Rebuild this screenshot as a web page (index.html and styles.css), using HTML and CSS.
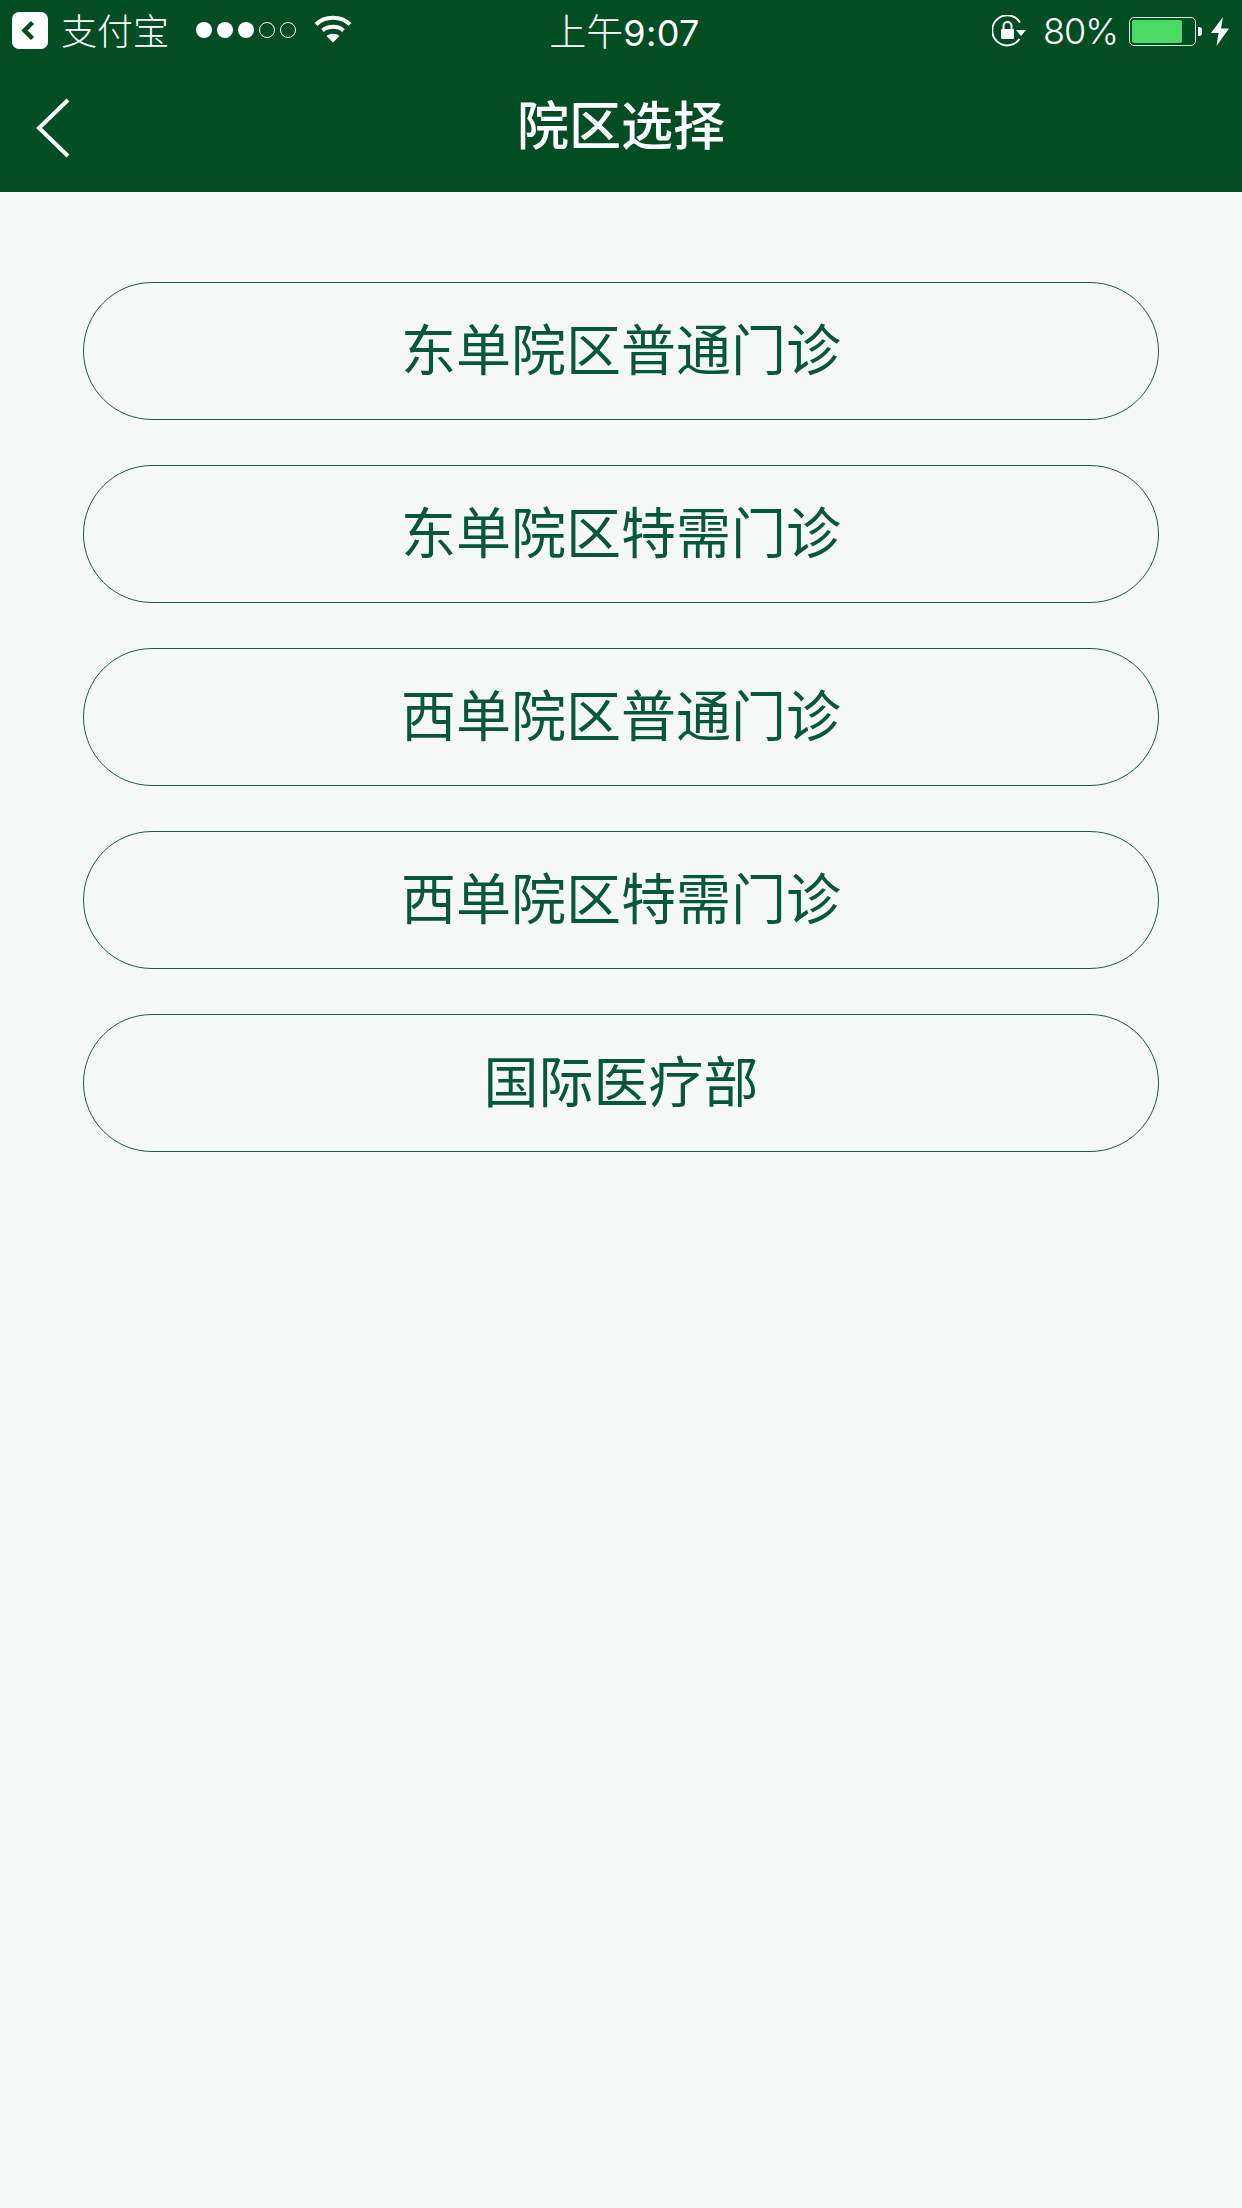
FILE: index.html
```html
<!DOCTYPE html>
<html lang="zh-CN">
<head>
<meta charset="utf-8">
<title>院区选择</title>
<link rel="stylesheet" href="styles.css">
</head>
<body>
<header class="top">
  <div class="status">
    <div class="status-left">
      <svg class="app-back" width="36" height="37" viewBox="0 0 36 37"><rect width="36" height="37" rx="7" fill="#fff"/><path d="M20.500 10.500 L12.500 18.500 L20.500 26.500" fill="none" stroke="#034d23" stroke-width="4.500"/></svg>
      <span class="carrier">支付宝</span>
      <svg class="signal" width="102" height="18" viewBox="0 0 102 18">
        <circle cx="9" cy="9" r="8" fill="#fff"/><circle cx="30" cy="9" r="8" fill="#fff"/><circle cx="51" cy="9" r="8" fill="#fff"/>
        <circle cx="72" cy="9" r="7.500" fill="none" stroke="#fff" stroke-width="1"/><circle cx="93" cy="9" r="7.500" fill="none" stroke="#fff" stroke-width="1"/>
      </svg>
      <svg class="wifi" width="38" height="28" viewBox="0 0 38 28">
        <path d="M2 9.500 C11 0.500 27 0.500 36 9.500" fill="none" stroke="#fff" stroke-width="4"/>
        <path d="M8.500 15.500 C14 10.500 24 10.500 29.500 15.500" fill="none" stroke="#fff" stroke-width="4"/>
        <path d="M12.500 21 C16 18 22 18 25.500 21 L19 27.500 Z" fill="#fff"/>
      </svg>
    </div>
    <div class="time"><span class="time-cjk">上午</span>9:07</div>
    <div class="status-right">
      <svg class="lock" width="36" height="32" viewBox="0 0 36 32">
        <path d="M27.500 24 A15 15 0 1 1 28 7.500" fill="none" stroke="#fff" stroke-width="2"/>
        <path d="M24 15 L34 15 L29 21 Z" fill="#fff"/>
        <rect x="9" y="14" width="13" height="10" rx="1" fill="#fff"/>
        <path d="M11.500 14 V11 A4 4 0 0 1 19.500 11 V14" fill="none" stroke="#fff" stroke-width="2"/>
      </svg>
      <span class="percent">80%</span>
      <div class="battery">
        <div class="battery-body"><div class="battery-fill"></div></div>
        <div class="battery-tip"></div>
      </div>
      <svg class="bolt" width="18" height="29" viewBox="0 0 18 29"><path d="M12 0 L0 16 L7.500 16 L5.500 29 L18 11.500 L10 11.500 Z" fill="#fff"/></svg>
    </div>
  </div>
  <div class="nav">
    <svg class="nav-back" width="36" height="60" viewBox="0 0 36 60"><path d="M33 2 L4 30 L33 58" fill="none" stroke="#fff" stroke-width="4"/></svg>
    <h1 class="nav-title">院区选择</h1>
  </div>
</header>
<main class="list">
  <a class="pill">东单院区普通门诊</a>
  <a class="pill">东单院区特需门诊</a>
  <a class="pill">西单院区普通门诊</a>
  <a class="pill">西单院区特需门诊</a>
  <a class="pill">国际医疗部</a>
</main>
</body>
</html>
```
FILE: styles.css
```css
* { box-sizing: border-box; }
html, body { margin: 0; padding: 0; }
body {
  width: 1242px;
  height: 2208px;
  background: #f6f7f7;
  font-family: "Noto Sans CJK SC", "Liberation Sans", sans-serif;
  overflow: hidden;
}
.top { height: 192px; background: #034d23; color: #fff; }
.status {
  height: 60px;
  display: grid;
  grid-template-columns: 1fr auto 1fr;
  align-items: center;
  padding: 0 13px 0 12px;
}
.status-left, .status-right { display: flex; align-items: center; }
.status-left { padding-bottom: 3px; }
.status-right { justify-content: flex-end; padding-bottom: 1px; }
.app-back { margin-right: 13px; }
.carrier { font-size: 36px; line-height: 56px; font-weight: 300; margin-top: -2px; }
.signal { margin-left: 26px; margin-right: 17px; }
.wifi { margin-top: -2px; }
.time {
  font-family: "Inter", "Noto Sans CJK SC", sans-serif;
  font-size: 36px;
  font-weight: 400;
  line-height: 60px;
  letter-spacing: 0.4px;
  transform: translateX(4px);
}
.time-cjk { font-family: "Noto Sans CJK SC", sans-serif; font-weight: 300; font-size: 37px; letter-spacing: 0; }
.lock { margin-right: 15px; }
.percent {
  font-family: "Inter", sans-serif;
  font-size: 36px;
  font-weight: 300;
  letter-spacing: -1px;
  margin-right: 11px;
}
.battery { display: flex; align-items: center; margin-right: 9px; }
.battery-body {
  width: 67px;
  height: 29px;
  border: 1px solid #d8e6dc;
  border-radius: 5px;
  padding: 2px;
}
.battery-fill { width: 50px; height: 100%; background: #4cd964; border-radius: 2px; }
.battery-tip { width: 4px; height: 9px; background: #fff; border-radius: 0 3px 3px 0; margin-left: 2px; }
.bolt { margin-top: 1px; }
.nav {
  height: 132px;
  display: flex;
  align-items: center;
  justify-content: center;
  position: relative;
  padding-bottom: 6px;
}
.nav-back { position: absolute; left: 35px; top: 38px; }
.nav-title { margin: 0; font-size: 52px; font-weight: 500; line-height: 1; }
.list {
  display: flex;
  flex-direction: column;
  gap: 45px;
  padding: 90px 83px 0;
}
.pill {
  height: 138px;
  border: 1px solid #1f5a42;
  border-radius: 69px;
  display: flex;
  align-items: center;
  justify-content: center;
  color: #07583a;
  font-size: 55px;
  font-weight: 400;
  line-height: 1;
  padding-bottom: 9px;
}
```
